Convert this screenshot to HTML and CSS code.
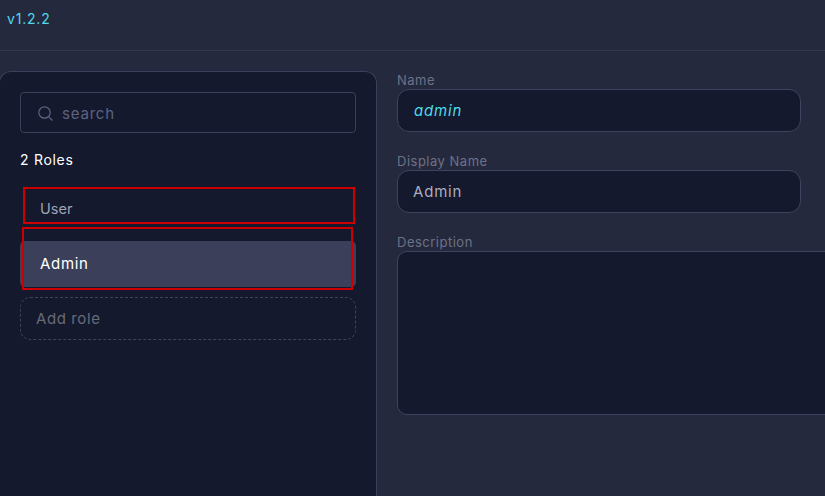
FILE: index.html
```html
<!DOCTYPE html>
<html lang="en">
<head>
    <meta charset="UTF-8">
    <meta name="viewport" content="width=device-width, initial-scale=1.0">
    <title>Roles</title>
    <link rel="stylesheet" href="styles.css">
</head>
<body>

<header class="topbar">
    <span class="version">v1.2.2</span>
</header>

<main class="content">
    <aside class="sidebar">
        <div class="search">
            <svg class="search-icon" width="15" height="15" viewBox="0 0 15 15" fill="none" stroke="currentColor" stroke-width="1.2">
                <circle cx="6.5" cy="6.5" r="5.7"/>
                <path d="M10.6 10.6L14.5 14.5"/>
            </svg>
            <span>search</span>
        </div>
        <div class="count">2 Roles</div>
        <div class="role-list">
            <div class="role">User</div>
            <div class="role active">Admin</div>
            <div class="mark mark-user"></div>
            <div class="mark mark-admin"></div>
        </div>
        <div class="add-role">Add role</div>
    </aside>

    <section class="form">
        <div class="field">
            <label>Name</label>
            <div class="input name-input">admin</div>
        </div>
        <div class="field">
            <label>Display Name</label>
            <div class="input">Admin</div>
        </div>
        <div class="field">
            <label>Description</label>
            <div class="textarea"></div>
        </div>
    </section>
</main>

</body>
</html>
```

FILE: styles.css
```css
html, body {
    height: 100%;
}
body {
    margin: 0;
    background-color: #24293d;
    color: white;
    font-family: Inter, "Liberation Sans", sans-serif;
    overflow: hidden;
}
.topbar {
    height: 50px;
    border-bottom: 1px solid #32374c;
    box-sizing: content-box;
    padding-left: 7px;
}
.version {
    display: block;
    padding-top: 10px;
    font-size: 14px;
    line-height: 18px;
    letter-spacing: 0.8px;
    color: #4fd8ea;
}
.content {
    display: flex;
    padding-top: 20px;
}
.sidebar {
    width: 378px;
    height: 425px;
    margin-left: -1px;
    padding: 20px 20px 0 20px;
    box-sizing: border-box;
    background-color: #14192d;
    border: 1px solid #3a3f5c;
    border-bottom: none;
    border-radius: 12px 12px 0 0;
}
.search {
    display: flex;
    align-items: center;
    gap: 9px;
    height: 41px;
    padding-left: 17px;
    box-sizing: border-box;
    border: 1px solid #3a3f5c;
    border-radius: 4px;
    font-size: 15px;
    letter-spacing: 0.8px;
    color: #5d6380;
}
.search span {
    padding-top: 1px;
}
.search-icon {
    flex: none;
    margin-top: 1px;
}
.count {
    margin-top: 17px;
    font-size: 14px;
    line-height: 20px;
    letter-spacing: 0.7px;
}
.role-list {
    position: relative;
    display: flex;
    flex-direction: column;
    gap: 10px;
    margin-top: 15px;
}
.role {
    height: 46px;
    padding-left: 20px;
    line-height: 47px;
    font-size: 14.5px;
    color: #9ea3b8;
    border-radius: 5px;
}
.role.active {
    background-color: #3b3f59;
    color: white;
    line-height: 46px;
    font-size: 15px;
    letter-spacing: 0.7px;
}
.mark {
    position: absolute;
    border: 2px solid #cc0000;
    box-sizing: border-box;
}
.mark-user {
    left: 3px;
    top: 2px;
    width: 332px;
    height: 37px;
}
.mark-admin {
    left: 2px;
    top: 42px;
    width: 331px;
    height: 63px;
}
.add-role {
    height: 43px;
    margin-top: 10px;
    padding-left: 15px;
    box-sizing: border-box;
    line-height: 41px;
    font-size: 15px;
    letter-spacing: 0.6px;
    color: #696b75;
    border: 1px dashed #3f4358;
    border-radius: 10px;
}
.form {
    margin-left: 20px;
    flex: 1;
    min-width: 0;
}
.field {
    margin-bottom: 20px;
}
.field label {
    display: block;
    font-size: 13px;
    line-height: 18px;
    letter-spacing: 0.5px;
    color: #6d7188;
}
.input {
    width: 404px;
    height: 43px;
    padding-left: 15px;
    box-sizing: border-box;
    line-height: 41px;
    font-size: 15px;
    letter-spacing: 0.8px;
    color: #a9adc0;
    background-color: #14192d;
    border: 1px solid #3f4360;
    border-radius: 12px;
}
.name-input {
    padding-left: 16px;
    font-style: italic;
    color: #4fd8ea;
}
.textarea {
    width: 460px;
    height: 164px;
    box-sizing: border-box;
    background-color: #14192d;
    border: 1px solid #3f4360;
    border-radius: 10px;
}
```
